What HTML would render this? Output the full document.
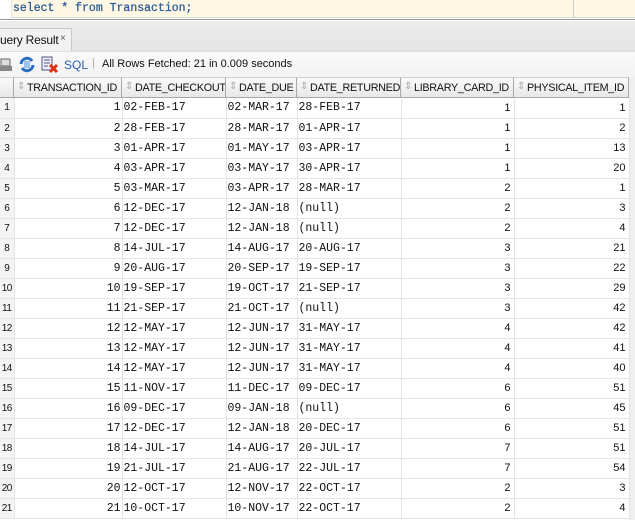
<!DOCTYPE html>
<html><head><meta charset="utf-8"><style>
*{margin:0;padding:0;box-sizing:border-box}
body{width:635px;height:520px;overflow:hidden;background:#fff;position:relative;font-family:"Liberation Sans",sans-serif}
.ed{position:absolute;left:0;top:0;width:635px;height:18px;background:#fdf7e3;border-bottom:1px solid #d8d8d8}
.ed .g{position:absolute;left:0;top:0;width:12px;height:18px;background:#fff;border-right:1px solid #e6e6e6}
.ed .t{position:absolute;left:13px;top:2px;font:11.5px "Liberation Mono",monospace;color:#2f5d95;white-space:pre;-webkit-text-stroke:0.3px #2f5d95}
.ed .v{position:absolute;left:573px;top:0;width:1px;height:18px;background:#ccc}
.gap{position:absolute;left:0;top:18px;width:635px;height:2px;background:#fff;border-bottom:1px solid #999}
.tabbar{position:absolute;left:0;top:21px;width:635px;height:30px;background:linear-gradient(#ededed,#e4e4e4)}
.tab{position:absolute;left:0;top:7px;width:72px;height:23px;background:#f2f2f2;border:1px solid #c8c8c8;border-left:none;border-bottom:none;font-size:12px;padding:4px 0 0 0;color:#111;letter-spacing:-0.2px}
.tab span{position:absolute;left:60px;top:4px;font-size:10px;color:#555}
.tb{position:absolute;left:0;top:51px;width:635px;height:26px;background:linear-gradient(#f9f9f9,#f3f3f3);border-top:1px solid #ddd;font-size:11px}
.hdr{position:absolute;top:77px;height:21px;background:linear-gradient(#fafafa,#e8e8e8);border-right:1px solid #a8a8a8;border-bottom:1px solid #a8a8a8;border-top:1px solid #cfcfcf;font-size:10.8px;letter-spacing:-0.3px;padding:4px 0 0 13px;color:#111;white-space:nowrap;overflow:hidden}
.hdr i{position:absolute;left:3px;top:3px;font-style:normal;color:#aaa;font-size:10px}
table{position:absolute;left:0;top:98px;border-collapse:collapse;table-layout:fixed;width:629px}
td{height:20px;border-right:1px solid #e4e4e4;border-bottom:1px solid #e4e4e4;font:11.5px "Liberation Mono",monospace;color:#111;white-space:nowrap;padding:0 1px;overflow:hidden}
td:nth-child(1){background:#f4f4f4;font:10px "Liberation Sans",sans-serif;padding:0;letter-spacing:-0.5px;text-align:center}
td:nth-child(2){text-align:right}
td:nth-child(6),td:nth-child(7){text-align:right;font:11px "Liberation Sans",sans-serif;padding-right:3px}
.rs{position:absolute;left:629px;top:77px;width:6px;height:443px;background:#efefef}
</style></head><body>
<div class="ed"><div class="g"></div><div class="t">select * from Transaction;</div><div class="v"></div></div>
<div class="gap"></div>
<div class="tabbar"><div class="tab">uery Result<span>×</span></div></div>
<div class="tb">
<svg style="position:absolute;left:0;top:5px" width="12" height="16"><rect x="1" y="2" width="9" height="7" fill="#ddd" stroke="#666"/><rect x="0" y="9" width="12" height="5" fill="#888"/></svg>
<svg style="position:absolute;left:18px;top:4px" width="18" height="17"><path d="M3 8a6 6 0 0 1 11-3" stroke="#2a6fc4" stroke-width="3" fill="none"/><path d="M15 9a6 6 0 0 1-11 3" stroke="#2a6fc4" stroke-width="3" fill="none"/><rect x="6" y="5" width="6" height="7" fill="#9cc3ee"/></svg>
<svg style="position:absolute;left:41px;top:4px" width="18" height="18"><rect x="1" y="1" width="10" height="13" fill="#eef" stroke="#557"/><path d="M3 4h6M3 7h6M3 10h4" stroke="#557"/><path d="M9 9l7 7M16 9l-7 7" stroke="#e03010" stroke-width="3"/></svg>
<span style="position:absolute;left:64px;top:6px;color:#2a5fb0;font-size:12px">SQL</span>
<span style="position:absolute;left:92px;top:5px;color:#aaa">|</span>
<span style="position:absolute;left:102px;top:6px;color:#111">All Rows Fetched: 21 in 0.009 seconds</span>
</div>
<div class="hdr" style="left:0;width:14px;padding:0"></div>
<div class="hdr" style="left:14px;width:108px"><i>⇕</i>TRANSACTION_ID</div>
<div class="hdr" style="left:122px;width:104px"><i>⇕</i>DATE_CHECKOUT</div>
<div class="hdr" style="left:226px;width:71px"><i>⇕</i>DATE_DUE</div>
<div class="hdr" style="left:297px;width:104px"><i>⇕</i>DATE_RETURNED</div>
<div class="hdr" style="left:401px;width:113px"><i>⇕</i>LIBRARY_CARD_ID</div>
<div class="hdr" style="left:514px;width:115px"><i>⇕</i>PHYSICAL_ITEM_ID</div>
<div class="rs"></div>
<table>
<colgroup><col style="width:14px"><col style="width:108px"><col style="width:104px"><col style="width:71px"><col style="width:104px"><col style="width:113px"><col style="width:115px"></colgroup>
<tr><td>1</td><td>1</td><td>02-FEB-17</td><td>02-MAR-17</td><td>28-FEB-17</td><td>1</td><td>1</td></tr>
<tr><td>2</td><td>2</td><td>28-FEB-17</td><td>28-MAR-17</td><td>01-APR-17</td><td>1</td><td>2</td></tr>
<tr><td>3</td><td>3</td><td>01-APR-17</td><td>01-MAY-17</td><td>03-APR-17</td><td>1</td><td>13</td></tr>
<tr><td>4</td><td>4</td><td>03-APR-17</td><td>03-MAY-17</td><td>30-APR-17</td><td>1</td><td>20</td></tr>
<tr><td>5</td><td>5</td><td>03-MAR-17</td><td>03-APR-17</td><td>28-MAR-17</td><td>2</td><td>1</td></tr>
<tr><td>6</td><td>6</td><td>12-DEC-17</td><td>12-JAN-18</td><td>(null)</td><td>2</td><td>3</td></tr>
<tr><td>7</td><td>7</td><td>12-DEC-17</td><td>12-JAN-18</td><td>(null)</td><td>2</td><td>4</td></tr>
<tr><td>8</td><td>8</td><td>14-JUL-17</td><td>14-AUG-17</td><td>20-AUG-17</td><td>3</td><td>21</td></tr>
<tr><td>9</td><td>9</td><td>20-AUG-17</td><td>20-SEP-17</td><td>19-SEP-17</td><td>3</td><td>22</td></tr>
<tr><td>10</td><td>10</td><td>19-SEP-17</td><td>19-OCT-17</td><td>21-SEP-17</td><td>3</td><td>29</td></tr>
<tr><td>11</td><td>11</td><td>21-SEP-17</td><td>21-OCT-17</td><td>(null)</td><td>3</td><td>42</td></tr>
<tr><td>12</td><td>12</td><td>12-MAY-17</td><td>12-JUN-17</td><td>31-MAY-17</td><td>4</td><td>42</td></tr>
<tr><td>13</td><td>13</td><td>12-MAY-17</td><td>12-JUN-17</td><td>31-MAY-17</td><td>4</td><td>41</td></tr>
<tr><td>14</td><td>14</td><td>12-MAY-17</td><td>12-JUN-17</td><td>31-MAY-17</td><td>4</td><td>40</td></tr>
<tr><td>15</td><td>15</td><td>11-NOV-17</td><td>11-DEC-17</td><td>09-DEC-17</td><td>6</td><td>51</td></tr>
<tr><td>16</td><td>16</td><td>09-DEC-17</td><td>09-JAN-18</td><td>(null)</td><td>6</td><td>45</td></tr>
<tr><td>17</td><td>17</td><td>12-DEC-17</td><td>12-JAN-18</td><td>20-DEC-17</td><td>6</td><td>51</td></tr>
<tr><td>18</td><td>18</td><td>14-JUL-17</td><td>14-AUG-17</td><td>20-JUL-17</td><td>7</td><td>51</td></tr>
<tr><td>19</td><td>19</td><td>21-JUL-17</td><td>21-AUG-17</td><td>22-JUL-17</td><td>7</td><td>54</td></tr>
<tr><td>20</td><td>20</td><td>12-OCT-17</td><td>12-NOV-17</td><td>22-OCT-17</td><td>2</td><td>3</td></tr>
<tr><td>21</td><td>21</td><td>10-OCT-17</td><td>10-NOV-17</td><td>22-OCT-17</td><td>2</td><td>4</td></tr>
</table>
</body></html>
